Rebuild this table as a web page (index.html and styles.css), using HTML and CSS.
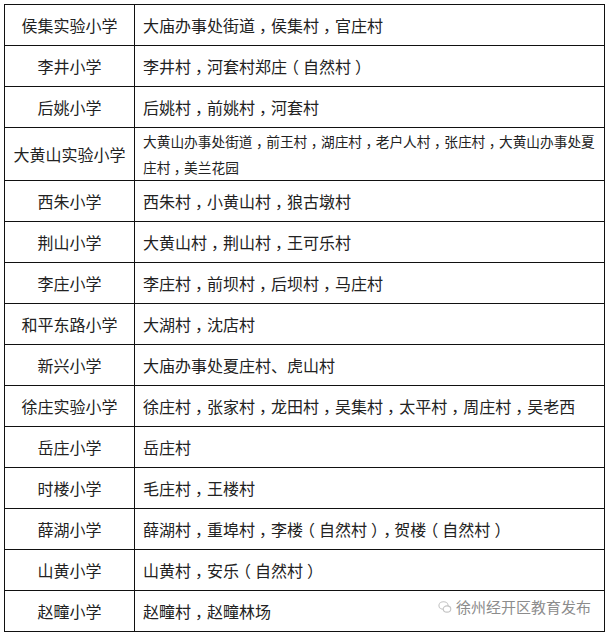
FILE: index.html
```html
<!DOCTYPE html>
<html lang="zh-CN">
<head>
<meta charset="utf-8">
<title>学区划分</title>
<link rel="stylesheet" href="styles.css">
</head>
<body>
<div class="wrap">
<table class="zones">
  <colgroup><col class="c1"><col class="c2"></colgroup>
  <tbody>
    <tr><td class="school">侯集实验小学</td><td class="area">大庙办事处街道<span class="c">，</span>侯集村<span class="c">，</span>官庄村</td></tr>
    <tr><td class="school">李井小学</td><td class="area">李井村<span class="c">，</span>河套村郑庄<span class="p">（</span>自然村<span class="p">）</span></td></tr>
    <tr><td class="school">后姚小学</td><td class="area">后姚村<span class="c">，</span>前姚村<span class="c">，</span>河套村</td></tr>
    <tr class="tall"><td class="school">大黄山实验小学</td><td class="area small">大黄山办事处街道<span class="c">，</span>前王村<span class="c">，</span>湖庄村<span class="c">，</span>老户人村<span class="c">，</span>张庄村<span class="c">，</span>大黄山办事处夏<br>庄村<span class="c">，</span>美兰花园</td></tr>
    <tr><td class="school">西朱小学</td><td class="area">西朱村<span class="c">，</span>小黄山村<span class="c">，</span>狼古墩村</td></tr>
    <tr><td class="school">荆山小学</td><td class="area">大黄山村<span class="c">，</span>荆山村<span class="c">，</span>王可乐村</td></tr>
    <tr><td class="school">李庄小学</td><td class="area">李庄村<span class="c">，</span>前坝村<span class="c">，</span>后坝村<span class="c">，</span>马庄村</td></tr>
    <tr><td class="school">和平东路小学</td><td class="area">大湖村<span class="c">，</span>沈店村</td></tr>
    <tr><td class="school">新兴小学</td><td class="area">大庙办事处夏庄村、虎山村</td></tr>
    <tr><td class="school">徐庄实验小学</td><td class="area">徐庄村<span class="c">，</span>张家村<span class="c">，</span>龙田村<span class="c">，</span>吴集村<span class="c">，</span>太平村<span class="c">，</span>周庄村<span class="c">，</span>吴老西</td></tr>
    <tr><td class="school">岳庄小学</td><td class="area">岳庄村</td></tr>
    <tr><td class="school">时楼小学</td><td class="area">毛庄村<span class="c">，</span>王楼村</td></tr>
    <tr><td class="school">薛湖小学</td><td class="area">薛湖村<span class="c">，</span>重埠村<span class="c">，</span>李楼<span class="p">（</span>自然村<span class="p">）</span><span class="ct">，</span>贺楼<span class="p">（</span>自然村<span class="p">）</span></td></tr>
    <tr><td class="school">山黄小学</td><td class="area">山黄村<span class="c">，</span>安乐<span class="p">（</span>自然村<span class="p">）</span></td></tr>
    <tr><td class="school">赵疃小学</td><td class="area">赵疃村<span class="c">，</span>赵疃林场</td></tr>
  </tbody>
</table>
<div class="mark">
  <svg class="mark-icon" viewBox="0 0 14 14" width="14" height="14" aria-hidden="true">
    <ellipse cx="5.5" cy="5.5" rx="4.6" ry="3.8" fill="none" stroke="#c4c4c4" stroke-width="1.1"/>
    <ellipse cx="9" cy="9" rx="3.8" ry="3.1" fill="#fff" stroke="#c4c4c4" stroke-width="1.1"/>
  </svg>
  <span class="mark-text">徐州经开区教育发布</span>
</div>
</div>
</body>
</html>
```
FILE: styles.css
```css
html, body {
  margin: 0;
  padding: 0;
  background: #ffffff;
}
body {
  padding: 4px 0 0 4px;
  font-family: "Noto Sans CJK SC", "Noto Sans", sans-serif;
  color: #222222;
}
.wrap {
  position: relative;
  width: 601px;
}
.zones {
  border-collapse: collapse;
  table-layout: fixed;
  width: 601px;
}
.c1 { width: 130px; }
.zones td {
  border: 1px solid #111111;
  height: 40px;
  padding: 0;
  font-size: 16px;
  line-height: 20px;
  vertical-align: middle;
}
.zones .school {
  text-align: center;
}
.zones .area {
  padding: 0 3px 0 8px;
}
.zones tr.tall td {
  height: 50px;
}
.zones .area.small {
  font-size: 13.7px;
  line-height: 26px;
}
.c {
  font-feature-settings: "halt" 1;
  padding: 0 0.25em;
}
.p {
  font-feature-settings: "halt" 1;
  padding: 0 0.25em;
}
.ct {
  font-feature-settings: "halt" 1;
  padding-right: 0.2em;
}
.mark {
  position: absolute;
  right: 14px;
  bottom: 16px;
  display: flex;
  align-items: center;
  gap: 4px;
}
.mark-icon {
  display: block;
}
.mark-text {
  font-size: 15px;
  line-height: 18px;
  color: #8c8c8c;
  text-shadow: 0 0 2px #ffffff, 0 0 2px #ffffff;
}
```
